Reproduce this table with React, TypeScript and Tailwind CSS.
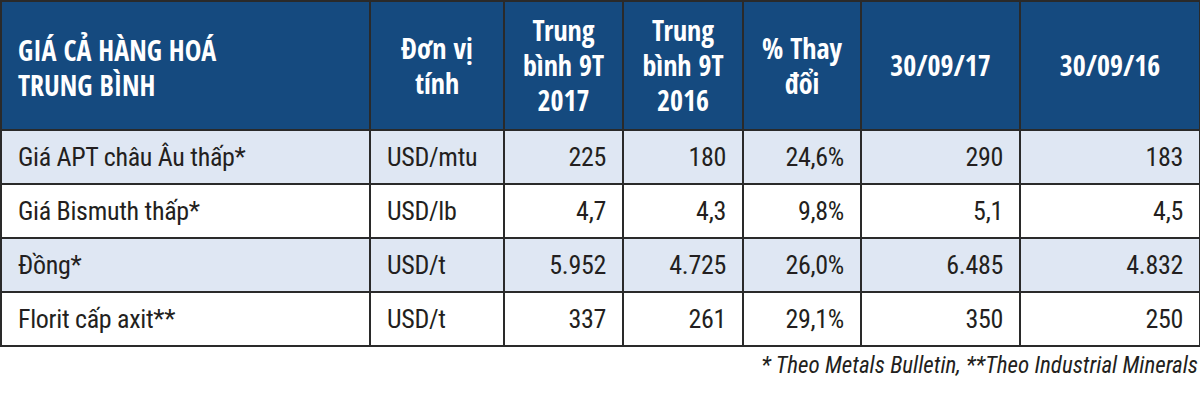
const ROWS = [
  ["Giá APT châu Âu thấp*", "USD/mtu", "225", "180", "24,6%", "290", "183"],
  ["Giá Bismuth thấp*", "USD/lb", "4,7", "4,3", "9,8%", "5,1", "4,5"],
  ["Đồng*", "USD/t", "5.952", "4.725", "26,0%", "6.485", "4.832"],
  ["Florit cấp axit**", "USD/t", "337", "261", "29,1%", "350", "250"],
];

export default function App() {
  return (
    <div className="w-[1200px] h-[407px] bg-white font-['Roboto_Condensed',sans-serif] text-[#231f20]">
      <table className="w-[1199px] table-fixed border-collapse border-2 border-[#2a2a2a]">
        <colgroup>
          <col className="w-[369px]" />
          <col className="w-[134px]" />
          <col className="w-[119px]" />
          <col className="w-[120px]" />
          <col className="w-[118px]" />
          <col className="w-[159px]" />
          <col className="w-[180px]" />
        </colgroup>
        <thead>
          <tr className="h-[129px] bg-[#154a7f] text-white font-['Open_Sans_Condensed','Roboto_Condensed',sans-serif] font-bold text-[28px] leading-[35px]">
            <th className="border-2 border-[#2a2a2a] px-4 pt-1 text-left font-bold">
              GIÁ CẢ HÀNG HOÁ<br />TRUNG BÌNH
            </th>
            <th className="border-2 border-[#2a2a2a] text-center font-bold">
              Đơn vị<br />tính
            </th>
            <th className="border-2 border-[#2a2a2a] text-center font-bold">
              Trung<br />bình 9T<br />2017
            </th>
            <th className="border-2 border-[#2a2a2a] text-center font-bold">
              Trung<br />bình 9T<br />2016
            </th>
            <th className="border-2 border-[#2a2a2a] text-center font-bold">
              % Thay<br />đổi
            </th>
            <th className="border-2 border-[#2a2a2a] text-center font-bold">30/09/17</th>
            <th className="border-2 border-[#2a2a2a] text-center font-bold">30/09/16</th>
          </tr>
        </thead>
        <tbody>
          {ROWS.map((row, i) => (
            <tr key={i} className={`h-[54px] text-[26px] tracking-[-0.3px] ${i % 2 === 0 ? "bg-[#dfe7f3]" : "bg-white"}`}>
              {row.map((cell, j) => (
                <td
                  key={j}
                  className={`border-2 border-[#2a2a2a] px-4 ${j < 2 ? "text-left" : "text-right"}`}
                >
                  {cell}
                </td>
              ))}
            </tr>
          ))}
        </tbody>
      </table>
      <p className="mt-[4px] pr-[2px] text-right italic text-[23px] leading-[30px]">
        * Theo Metals Bulletin, **Theo Industrial Minerals
      </p>
    </div>
  );
}
